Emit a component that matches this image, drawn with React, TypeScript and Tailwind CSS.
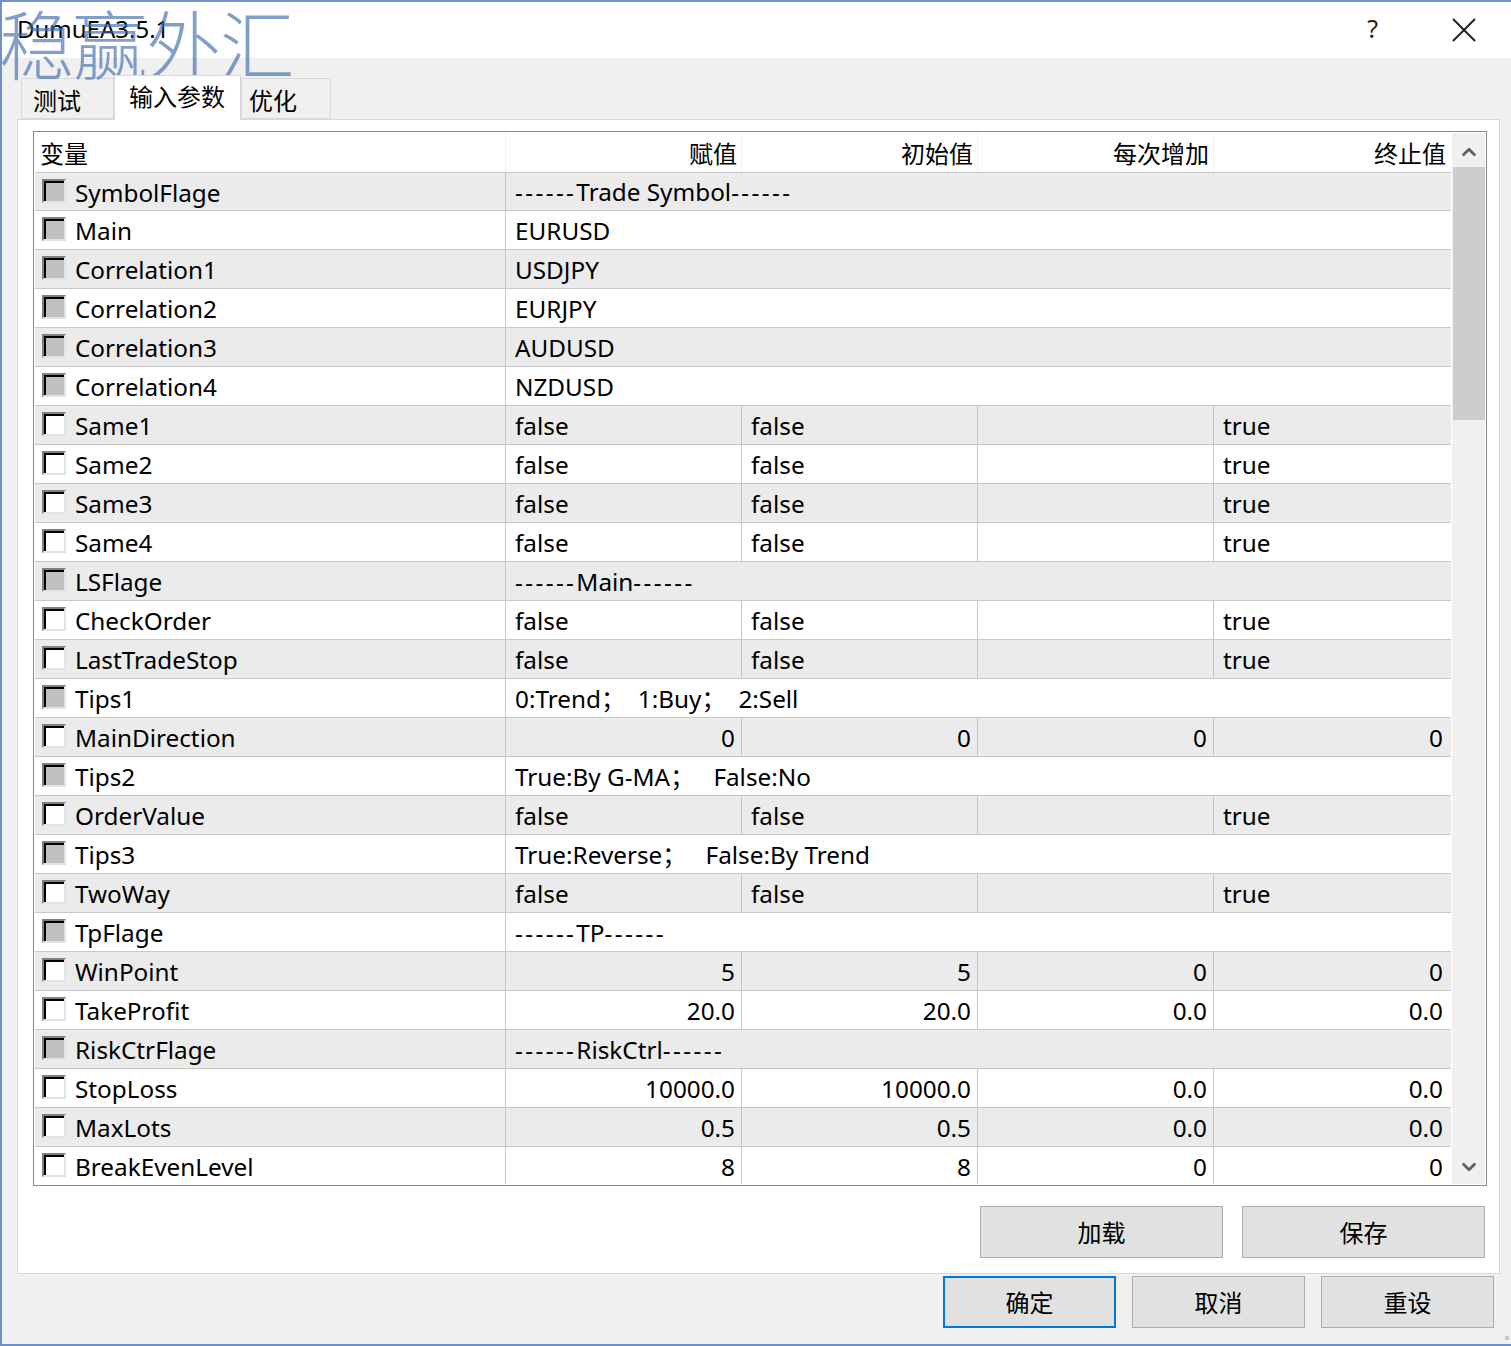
import React from 'react';
import { X, ChevronUp, ChevronDown } from 'lucide-react';

type Row =
  | { name: string; mark: boolean; span: string }
  | { name: string; mark: boolean; cells: [string, string, string, string]; right?: boolean };

const bool = (name: string): Row => ({ name, mark: false, cells: ['false', 'false', '', 'true'] });
const num = (name: string, a: string, b: string, c: string, d: string): Row => ({
  name,
  mark: false,
  cells: [a, b, c, d],
  right: true,
});
const span = (name: string, text: string): Row => ({ name, mark: true, span: text });

const rows: Row[] = [
  span('SymbolFlage', '------Trade Symbol------'),
  span('Main', 'EURUSD'),
  span('Correlation1', 'USDJPY'),
  span('Correlation2', 'EURJPY'),
  span('Correlation3', 'AUDUSD'),
  span('Correlation4', 'NZDUSD'),
  bool('Same1'),
  bool('Same2'),
  bool('Same3'),
  bool('Same4'),
  span('LSFlage', '------Main------'),
  bool('CheckOrder'),
  bool('LastTradeStop'),
  span('Tips1', '0:Trend；  1:Buy；  2:Sell'),
  num('MainDirection', '0', '0', '0', '0'),
  span('Tips2', 'True:By G-MA；   False:No'),
  bool('OrderValue'),
  span('Tips3', 'True:Reverse；   False:By Trend'),
  bool('TwoWay'),
  span('TpFlage', '------TP------'),
  num('WinPoint', '5', '5', '0', '0'),
  num('TakeProfit', '20.0', '20.0', '0.0', '0.0'),
  span('RiskCtrFlage', '------RiskCtrl------'),
  num('StopLoss', '10000.0', '10000.0', '0.0', '0.0'),
  num('MaxLots', '0.5', '0.5', '0.0', '0.0'),
  num('BreakEvenLevel', '8', '8', '0', '0'),
];

// the dashes are wider in the original UI font
const SpanText = ({ text }: { text: string }) => (
  <>
    {text.split(/(-{2,})/).map((part, i) =>
      part.startsWith('--') ? (
        <span key={i} className="tracking-[2.4px]">
          {part}
        </span>
      ) : (
        <span key={i}>{part}</span>
      ),
    )}
  </>
);

const Check = ({ mark }: { mark: boolean }) => (
  <div className="w-[24px] h-[24px] mt-[-2px] ml-[7px] mr-[9px] border-2 border-t-[#808080] border-l-[#808080] border-r-[#e3e3e3] border-b-[#e3e3e3] shrink-0">
    <div className={`w-full h-full border-t-2 border-l-2 border-black ${mark ? 'bg-[#c0c0c0]' : 'bg-white'}`} />
  </div>
);

const Btn = ({ label, primary, w }: { label: string; primary?: boolean; w: string }) => (
  <button
    className={`h-[52px] pt-[2px] bg-[#e1e1e1] text-[24px] text-black ${w} ${primary ? 'border-2 border-[#0078d7]' : 'border border-[#adadad]'}`}
  >
    {label}
  </button>
);

const Tab = ({ label, active, w, pad }: { label: string; active?: boolean; w: string; pad: string }) => (
  <div
    className={`${w} ${pad} border-[#d9d9d9] text-[24px] leading-none ${
      active
        ? 'h-[45px] bg-white border-x border-t pt-[9px] relative z-10 mb-[-1px]'
        : 'h-[41px] bg-[#f0f0f0] border-t border-x border-b pt-[10px]'
    }`}
  >
    {label}
  </div>
);

export default function App() {
  return (
    <div className="relative w-[1511px] h-[1346px] overflow-hidden flex flex-col bg-[#f0f0f0] border-l-2 border-t-2 border-b-2 border-[#6b93c7] text-black font-['Noto_Sans','Noto_Sans_CJK_SC',sans-serif]">
      <div className="h-[56px] bg-white flex items-center shrink-0 pl-[15px]">
        <span className="text-[24px] mt-[-2px]">DumuEA3.5.1</span>
        <span className="ml-auto text-[25px] mr-[65px] mt-[-2px] text-[#222]">?</span>
        <X className="w-[42px] h-[42px] mr-[26px] text-[#222]" strokeWidth={1.1} />
      </div>

      <div className="absolute left-[-3px] top-[-1px] text-[75px] leading-[88px] tracking-[-1.5px] font-light text-[#3f6cb0]/65 whitespace-nowrap pointer-events-none">
        稳赢外汇
      </div>

      <div className="flex items-end pl-[19px] mt-[15px] shrink-0 h-[46px]">
        <Tab label="测试" w="w-[93px]" pad="pl-[11px]" />
        <Tab label="输入参数" active w="w-[127px]" pad="pl-[14px]" />
        <Tab label="优化" w="w-[90px]" pad="pl-[7px]" />
      </div>

      <div className="ml-[15px] w-[1483px] h-[1155px] bg-white border border-[#d9d9d9] pt-[11px] pl-[15px] shrink-0">
        <div className="w-[1454px] h-[1055px] border border-[#8a8a8a] p-[1px] flex overflow-hidden">
          <div className="w-[1416px] shrink-0 overflow-hidden">
            <div className="h-[40px] grid grid-cols-[471px_236px_236px_236px_237px] text-[24px] border-b border-[#c8c8c8]">
              <div className="pl-[5px] pt-[3px] border-r border-[#f0f0f0]">变量</div>
              <div className="text-right pr-[4px] pt-[3px] border-r border-[#f0f0f0]">赋值</div>
              <div className="text-right pr-[4px] pt-[3px] border-r border-[#f0f0f0]">初始值</div>
              <div className="text-right pr-[4px] pt-[3px] border-r border-[#f0f0f0]">每次增加</div>
              <div className="text-right pr-[5px] pt-[3px]">终止值</div>
            </div>
            {rows.map((r, i) => (
              <div
                key={r.name}
                className={`grid grid-cols-[471px_236px_236px_236px_237px] items-stretch text-[24.3px] border-b border-[#c8c8c8] ${i === 0 ? 'h-[38px] leading-[38px]' : 'h-[39px] leading-[40px]'} ${i % 2 === 0 ? 'bg-[#ebebeb]' : 'bg-white'}`}
              >
                <div className={`flex items-center border-r border-[#c8c8c8] ${i === 0 ? 'h-[37px]' : 'h-[38px]'}`}>
                  <Check mark={r.mark} />
                  <span className="mt-[2px] leading-[38px]">{r.name}</span>
                </div>
                {'span' in r ? (
                  <div className={`col-span-4 pl-[9px] whitespace-pre ${i === 0 ? 'h-[37px]' : 'h-[38px]'}`}>
                    <SpanText text={r.span} />
                  </div>
                ) : (
                  r.cells.map((c, j) => (
                    <div
                      key={j}
                      className={`h-[38px] ${j < 3 ? 'border-r border-[#c8c8c8]' : ''} ${
                        r.right ? (j === 3 ? 'text-right pr-[8px]' : 'text-right pr-[6px]') : 'pl-[9px]'
                      }`}
                    >
                      {c}
                    </div>
                  ))
                )}
              </div>
            ))}
          </div>
          <div className="w-[33px] ml-[1px] bg-[#f0f0f0] flex flex-col items-center">
            <div className="h-[34px] pt-[3px] flex items-center justify-center shrink-0">
              <ChevronUp className="w-[22px] h-[22px] text-[#606060]" strokeWidth={3} />
            </div>
            <div className="w-[32px] h-[253px] bg-[#cdcdcd] shrink-0" />
            <div className="mt-auto h-[34px] flex items-center justify-center shrink-0">
              <ChevronDown className="w-[22px] h-[22px] text-[#606060]" strokeWidth={3} />
            </div>
          </div>
        </div>
        <div className="flex justify-end gap-[19px] mt-[20px] pr-[14px]">
          <Btn label="加载" w="w-[243px]" />
          <Btn label="保存" w="w-[243px]" />
        </div>
      </div>

      <div className="flex justify-end gap-[16px] mt-[2px] pr-[17px]">
        <Btn label="确定" primary w="w-[173px]" />
        <Btn label="取消" w="w-[173px]" />
        <Btn label="重设" w="w-[173px]" />
      </div>

      <div className="absolute right-[2px] bottom-[4px] w-[4px] h-[4px] bg-[#c8c8c8]" />
    </div>
  );
}
